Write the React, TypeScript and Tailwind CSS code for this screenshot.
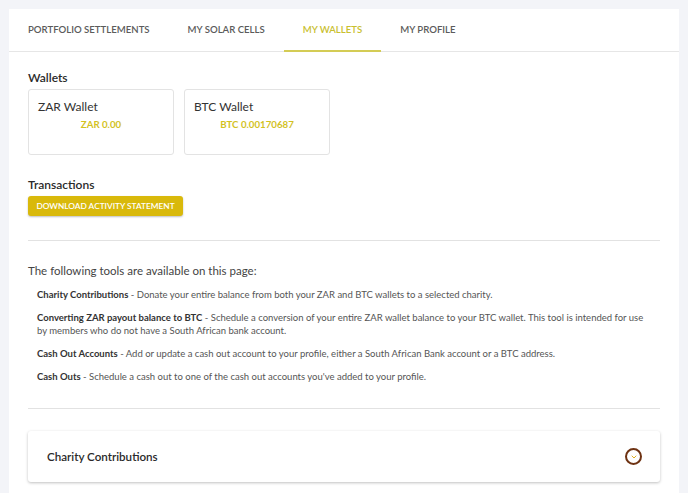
import { ChevronDown } from 'lucide-react';

const tabs = ['PORTFOLIO SETTLEMENTS', 'MY SOLAR CELLS', 'MY WALLETS', 'MY PROFILE'];

const wallets = [
    { name: 'ZAR Wallet', balance: 'ZAR 0.00' },
    { name: 'BTC Wallet', balance: 'BTC 0.00170687' },
];

export default function App() {
    return (
        <div className="min-h-screen bg-[#f3f4f8] pl-[9px] pt-[9px] font-['Lato',sans-serif]">
            <div className="w-[670px] min-h-[484px] bg-white">
                {/* Tabs */}
                <div className="flex h-[43px] border-b border-[#e6e6e6]">
                    {tabs.map((t) => {
                        const active = t === 'MY WALLETS';
                        return (
                            <div
                                key={t}
                                className={
                                    active
                                        ? 'px-[19px] pt-[14px] text-[9.6px] leading-[13px] font-semibold text-[#c9c02f] border-b-2 border-[#d4cc55] -mb-px'
                                        : 'px-[19px] pt-[14px] text-[9.6px] leading-[13px] font-semibold text-[#5b5b5b]'
                                }
                            >
                                {t}
                            </div>
                        );
                    })}
                </div>

                <div className="px-[19px]">
                    {/* Wallets */}
                    <h2 className="mt-[18px] text-[12px] leading-[16px] font-semibold text-[#2a2a2a]">Wallets</h2>
                    <div className="mt-[3px] flex gap-[10px]">
                        {wallets.map((w) => (
                            <div key={w.name} className="h-[66px] w-[146px] rounded-[3px] border border-[#e3e3e3] pl-[9px] pt-[9px]">
                                <p className="text-[12px] leading-[16px] text-[#333]">{w.name}</p>
                                <p className="mt-[2px] pr-[9px] text-center text-[9.7px] leading-[14px] font-bold text-[#d3c21f]">{w.balance}</p>
                            </div>
                        ))}
                    </div>

                    {/* Transactions */}
                    <h2 className="mt-[22px] text-[12px] leading-[16px] font-semibold text-[#2a2a2a]">Transactions</h2>
                    <button className="mt-[3px] flex h-[20px] w-[155px] items-center justify-center rounded-[3px] bg-[#d9b90b] text-[8.3px] font-semibold text-white shadow-[0_1px_2px_rgba(0,0,0,0.25)]">
                        DOWNLOAD ACTIVITY STATEMENT
                    </button>

                    <hr className="mt-[24px] border-[#e2e2e2]" />

                    {/* Tools */}
                    <p className="mt-[22px] text-[11.5px] leading-[16px] text-[#444]">The following tools are available on this page:</p>
                    <div className="mt-[9px] space-y-[10px] pl-[9px] pr-[8px] text-[9.5px] leading-[13px] text-[#555]">
                        <p>
                            <span className="font-bold text-[#333]">Charity Contributions</span> - Donate your entire balance from both your ZAR and BTC wallets to a selected charity.
                        </p>
                        <p>
                            <span className="font-bold text-[#333]">Converting ZAR payout balance to BTC</span> - Schedule a conversion of your entire ZAR wallet balance to your BTC wallet. This tool is intended for use by members who do not have a South African bank account.
                        </p>
                        <p>
                            <span className="font-bold text-[#333]">Cash Out Accounts</span> - Add or update a cash out account to your profile, either a South African Bank account or a BTC address.
                        </p>
                        <p>
                            <span className="font-bold text-[#333]">Cash Outs</span> - Schedule a cash out to one of the cash out accounts you've added to your profile.
                        </p>
                    </div>

                    <hr className="mt-[25px] border-[#e2e2e2]" />

                    {/* Accordion */}
                    <div className="mt-[22px] flex h-[51px] items-center justify-between rounded-[3px] bg-white pl-[19px] pr-[18px] shadow-[0_1px_3px_rgba(0,0,0,0.25)]">
                        <span className="text-[11.6px] font-semibold text-[#2a2a2a]">Charity Contributions</span>
                        <span className="flex h-[17px] w-[17px] items-center justify-center rounded-full border-2 border-[#6e3212]">
                            <ChevronDown className="h-[8px] w-[8px] text-[#e0b020]" strokeWidth={3} />
                        </span>
                    </div>
                </div>
            </div>
        </div>
    );
}
